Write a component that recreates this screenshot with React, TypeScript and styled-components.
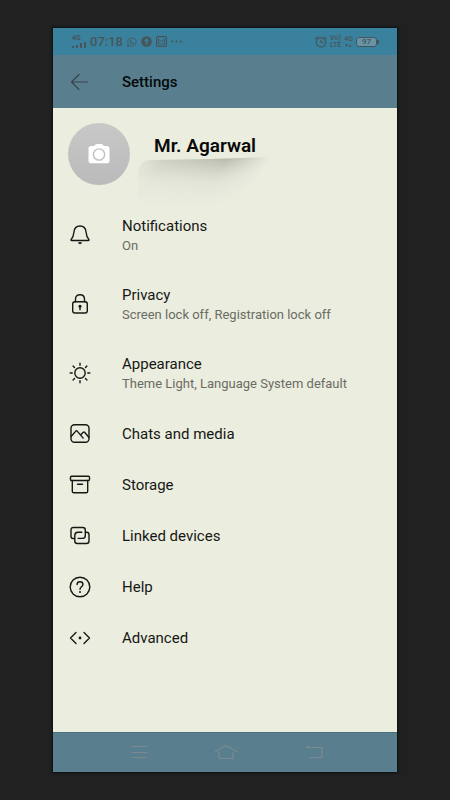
import React from "react";
import styled, { createGlobalStyle } from "styled-components";

const GlobalStyle = createGlobalStyle`
  *, *::before, *::after { box-sizing: border-box; }
  body {
    margin: 0;
    background: #212121;
    font-family: Roboto, "Liberation Sans", sans-serif;
  }
`;

const Page = styled.div`
  min-height: 100vh;
  padding: 28px 53px;
  display: flex;
`;

const Phone = styled.div`
  flex: 1;
  min-width: 0;
  display: flex;
  flex-direction: column;
  background: #ebeddf;
  box-shadow: 0 0 2px 1px #0c0f10;
`;

const StatusBar = styled.div`
  display: flex;
  align-items: center;
  justify-content: space-between;
  height: 27px;
  padding: 0 20px 0 19px;
  background: #3a819d;
  color: #47555b;
`;

const StatusGroup = styled.div<{ $gap: number }>`
  display: flex;
  align-items: center;
  gap: ${(p) => p.$gap}px;
`;

const Signal = styled.div`
  display: flex;
  flex-direction: column;
  font-size: 7px;
  line-height: 7px;
  font-weight: 600;
`;

const Time = styled.span`
  font-size: 13px;
  line-height: 16px;
  font-weight: 500;
`;

const Stacked = styled.span`
  display: flex;
  flex-direction: column;
  font-size: 7px;
  line-height: 7px;
  font-weight: 500;
`;

const Battery = styled.span`
  position: relative;
  width: 21px;
  height: 10px;
  border: 1px solid #47555b;
  border-radius: 3px;
  background: #6795a7;
  font-size: 8px;
  line-height: 8px;
  font-weight: 600;
  text-align: center;
  &::after {
    content: "";
    position: absolute;
    right: -3px;
    top: 2px;
    width: 2px;
    height: 4px;
    background: #47555b;
  }
`;

const AppBar = styled.header`
  display: flex;
  align-items: center;
  gap: 31px;
  height: 53px;
  padding: 0 16px;
  background: #597f8e;
`;

const IconButton = styled.button`
  display: flex;
  padding: 0;
  border: 0;
  background: none;
  color: #3c4347;
  cursor: pointer;
`;

const Title = styled.h1`
  margin: 0;
  font-size: 15px;
  line-height: 20px;
  font-weight: 500;
  color: #05090b;
`;

const Profile = styled.section`
  display: flex;
  align-items: flex-start;
  gap: 6px;
  height: 93px;
  padding: 15px 15px 0;
`;

const Avatar = styled.button`
  display: flex;
  align-items: center;
  justify-content: center;
  flex: none;
  width: 62px;
  height: 62px;
  padding: 0;
  border: 0;
  border-radius: 50%;
  background: linear-gradient(#c8c8c8, #bababa);
  cursor: pointer;
`;

const Identity = styled.div`
  display: flex;
  flex-direction: column;
  padding-top: 11px;
`;

const Name = styled.h2`
  margin: 0;
  padding-left: 18px;
  font-size: 19px;
  line-height: 23px;
  font-weight: 600;
  color: #090a08;
`;

const Menu = styled.nav`
  display: flex;
  flex-direction: column;
  flex: 1;
`;

const Row = styled.a<{ $tall: boolean }>`
  display: flex;
  align-items: center;
  gap: 31px;
  min-height: ${(p) => (p.$tall ? 69 : 51)}px;
  padding: ${(p) => (p.$tall ? "0 16px 1px" : "0 16px")};
  color: #161815;
  text-decoration: none;
`;

const Labels = styled.span`
  display: flex;
  flex-direction: column;
`;

const Label = styled.span`
  font-size: 15px;
  line-height: 20px;
`;

const Detail = styled.span`
  font-size: 13px;
  line-height: 19px;
  color: #6a6c63;
`;

const NavBar = styled.footer`
  display: flex;
  align-items: center;
  justify-content: space-between;
  height: 40px;
  padding: 0 74px 2px 75px;
  background: #597f8e;
  border-top: 1px solid #4b6f7c;
`;

const NavButton = styled(IconButton)`
  color: #7c898f;
`;

const Icon = styled.svg`
  display: block;
  flex: none;
  fill: none;
  stroke: currentColor;
  stroke-width: 1.4;
  stroke-linecap: round;
  stroke-linejoin: round;
`;

const Glyph = ({ children }: { children: React.ReactNode }) => (
  <Icon width="22" height="22" viewBox="0 0 22 22" aria-hidden="true">
    {children}
  </Icon>
);

const items = [
  {
    label: "Notifications",
    detail: "On",
    icon: (
      <>
        <path d="M2.5 16.5c-.5 0-.6-.7-.2-1.2 2-2 2.300-3.600 2.600-7C5.200 4.200 7.500 2 11 2s5.800 2.200 6.100 6.300c.3 3.400.6 5 2.600 7 .4.500.3 1.200-.2 1.200z" />
        <path d="M9 18.300h4q-.4 1.900-2 1.900t-2-1.900z" fill="currentColor" stroke="none" />
      </>
    ),
  },
  {
    label: "Privacy",
    detail: "Screen lock off, Registration lock off",
    icon: (
      <>
        <rect x="3.700" y="8.800" width="14.600" height="11.200" rx="2.200" />
        <path d="M6.500 8.800V6.200C6.500 3.300 8.300 1.700 11 1.700s4.500 1.600 4.500 4.500v2.600" />
        <path d="M11 13.500v3.200" />
        <circle cx="11" cy="13.300" r="1.500" fill="currentColor" stroke="none" />
      </>
    ),
  },
  {
    label: "Appearance",
    detail: "Theme Light, Language System default",
    icon: (
      <>
        <circle cx="11" cy="11" r="5.200" />
        <path d="M11 1.200v2M11 18.800v2M1.200 11h2M18.800 11h2M4.100 4.100l1.400 1.400M16.500 16.500l1.400 1.400M4.100 17.900l1.400-1.400M16.500 5.500l1.400-1.400" />
      </>
    ),
  },
  {
    label: "Chats and media",
    icon: (
      <>
        <rect x="2" y="1.800" width="18" height="17.500" rx="3.500" />
        <path d="M2.300 13.300l4.500-5.200q.7-.7 1.400 0l6 7M11.800 11.800l2.400-2.600q.7-.6 1.400 0l4.200 5" />
      </>
    ),
  },
  {
    label: "Storage",
    icon: (
      <>
        <rect x="1.500" y="2.200" width="19" height="4.300" rx="1" />
        <path d="M3.300 6.500v10.700q0 1.600 1.600 1.600h12.200q1.600 0 1.600-1.600V6.500M8.500 10.300h5" />
      </>
    ),
  },
  {
    label: "Linked devices",
    icon: (
      <>
        <path d="M5.500 13.500H4.200Q2 13.500 2 11.300V5q0-2.500 2.500-2.500h9.300q2.500 0 2.500 2.500v5.500q0 2.900-2.800 2.900H9.200" />
        <path d="M16.500 7.300h1q2.500 0 2.500 2.500V16q0 2.500-2.500 2.500H8.300q-2.500 0-2.500-2.500v-5.500q0-3.200 3-3.200h4" />
      </>
    ),
  },
  {
    label: "Help",
    icon: (
      <>
        <circle cx="11" cy="11" r="9.800" />
        <path d="M8.100 8.500C8.100 6.800 9.300 5.800 11 5.800s2.900 1 2.900 2.600c0 2.300-2.900 2.300-2.900 4.800" />
        <circle cx="11" cy="15.900" r="1" fill="currentColor" stroke="none" />
      </>
    ),
  },
  {
    label: "Advanced",
    icon: (
      <>
        <path d="M7 5.500L1.500 11 7 16.500M15 5.500l5.500 5.500-5.500 5.500" />
        <circle cx="11" cy="11" r="1.400" fill="currentColor" stroke="none" />
      </>
    ),
  },
];

export default function App() {
  return (
    <>
      <GlobalStyle />
      <Page>
        <Phone>
          <StatusBar>
            <StatusGroup $gap={4}>
              <Signal>
                <span>4G</span>
                <svg width="14" height="6" viewBox="0 0 14 6" fill="currentColor" aria-hidden="true">
                  <path d="M0 4h2v2H0zM4 3h2v3H4zM8 1h2v5H8zM12 0h2v6h-2z" />
                </svg>
              </Signal>
              <Time>07:18</Time>
              <Icon width="10" height="10" viewBox="0 0 10 10" aria-hidden="true">
                <path strokeWidth=".8" d="M.7 9.400l.6-2.200A4.200 4.200 0 1 1 3 8.800z" />
                <path strokeWidth="1.100" d="M3.300 3.200c0 2 1.600 3.500 3.500 3.500" />
              </Icon>
              <Icon width="11" height="11" viewBox="0 0 11 11" aria-hidden="true">
                <circle cx="5.500" cy="5.500" r="5.300" fill="currentColor" stroke="none" />
                <path stroke="#3a819d" strokeWidth="1.300" d="M5.500 8V3.200M3.900 4.700l1.600-1.600 1.600 1.600" />
              </Icon>
              <Icon width="11" height="11" viewBox="0 0 11 11" aria-hidden="true">
                <rect x=".6" y=".6" width="9.800" height="9.800" rx="1" strokeWidth="1.200" />
                <path strokeWidth=".9" d="M2.600 3.200v4.900h5.800V3.200M2.600 3.200q2.900 4.200 5.800 0" />
              </Icon>
              <svg width="11" height="3" viewBox="0 0 11 3" fill="currentColor" aria-hidden="true">
                <circle cx="1.200" cy="1.500" r="1" />
                <circle cx="5.500" cy="1.500" r="1" />
                <circle cx="9.800" cy="1.500" r="1" />
              </svg>
            </StatusGroup>
            <StatusGroup $gap={3}>
              <Icon width="12" height="12" viewBox="0 0 12 12" aria-hidden="true">
                <circle cx="6" cy="6.300" r="4.700" strokeWidth="1.200" />
                <path strokeWidth="1.200" d="M.7 2.600L2.600 .9M11.300 2.600L9.400 .9M6 4v2.500h2" />
              </Icon>
              <Stacked>
                <span>Vo)</span>
                <span>LTE</span>
              </Stacked>
              <Stacked>
                <span>4G</span>
                <svg width="8" height="5" viewBox="0 0 8 5" fill="currentColor" aria-hidden="true">
                  <path d="M1 1h3L2.500 4zM4.500 4h3L6 1z" />
                </svg>
              </Stacked>
              <Battery>97</Battery>
            </StatusGroup>
          </StatusBar>

          <AppBar>
            <IconButton aria-label="Back">
              <Glyph>
                <path strokeWidth="1.200" d="M18.500 11H3M10 3.500L2.500 11l7.500 7.500" />
              </Glyph>
            </IconButton>
            <Title>Settings</Title>
          </AppBar>

          <Profile>
            <Avatar aria-label="Change profile photo">
              <svg width="22" height="22" viewBox="0 0 22 22" aria-hidden="true">
                <path
                  fill="#fff"
                  d="M3 3h3.200l1.200-1.400Q8 1 9 1h4q1 0 1.600.6L15.800 3H19q2.500 0 2.500 2.500v12.300q0 2.500-2.500 2.500H3q-2.500 0-2.500-2.500V5.500Q.5 3 3 3z"
                />
                <circle cx="11" cy="11.500" r="5.600" fill="none" stroke="#bfbfbf" strokeWidth="1.400" />
              </svg>
            </Avatar>
            <Identity>
              <Name>Mr. Agarwal</Name>
              <svg width="134" height="54" viewBox="0 0 134 54" aria-hidden="true">
                <defs>
                  <linearGradient id="fade" x1="0" y1="0" x2="0" y2="1">
                    <stop offset="0" stopColor="#7d8374" stopOpacity=".5" />
                    <stop offset=".2" stopColor="#8f9585" stopOpacity=".36" />
                    <stop offset=".5" stopColor="#a9ae9e" stopOpacity=".14" />
                    <stop offset="1" stopColor="#c0c5b4" stopOpacity="0" />
                  </linearGradient>
                  <linearGradient id="sides" x1="0" y1="0" x2="1" y2=".25">
                    <stop offset="0" stopColor="#fff" stopOpacity="0" />
                    <stop offset=".2" stopColor="#fff" stopOpacity=".6" />
                    <stop offset=".65" stopColor="#fff" />
                    <stop offset=".95" stopColor="#fff" stopOpacity="0" />
                  </linearGradient>
                  <mask id="edges">
                    <rect width="134" height="54" fill="url(#sides)" />
                  </mask>
                </defs>
                <path
                  d="M2 14Q4 3 14 3L74 2l60-2v50H14Q2 50 2 38z"
                  fill="url(#fade)"
                  mask="url(#edges)"
                />
              </svg>
            </Identity>
          </Profile>

          <Menu aria-label="Settings">
            {items.map((item) => (
              <Row key={item.label} href="#" $tall={Boolean(item.detail)}>
                <Glyph>{item.icon}</Glyph>
                <Labels>
                  <Label>{item.label}</Label>
                  {item.detail && <Detail>{item.detail}</Detail>}
                </Labels>
              </Row>
            ))}
          </Menu>

          <NavBar>
            <NavButton aria-label="Recent apps">
              <Icon width="20" height="16" viewBox="0 0 20 16" aria-hidden="true">
                <path strokeWidth="1.200" d="M4 2.500h15M4 8.500h15M4 13.500h15" />
              </Icon>
            </NavButton>
            <NavButton aria-label="Home">
              <Icon width="24" height="16" viewBox="0 0 24 16" aria-hidden="true">
                <path strokeWidth="1.200" d="M1.500 7.500L12 1.500l10.500 6M5 8.500v5q0 1 1 1h12q1 0 1-1v-5" />
              </Icon>
            </NavButton>
            <NavButton aria-label="Go back">
              <Icon width="20" height="16" viewBox="0 0 20 16" aria-hidden="true">
                <path strokeWidth="1.200" d="M6 1.500L3.500 3.500h15.500v10H7M3.500 3.500h4" />
              </Icon>
            </NavButton>
          </NavBar>
        </Phone>
      </Page>
    </>
  );
}
